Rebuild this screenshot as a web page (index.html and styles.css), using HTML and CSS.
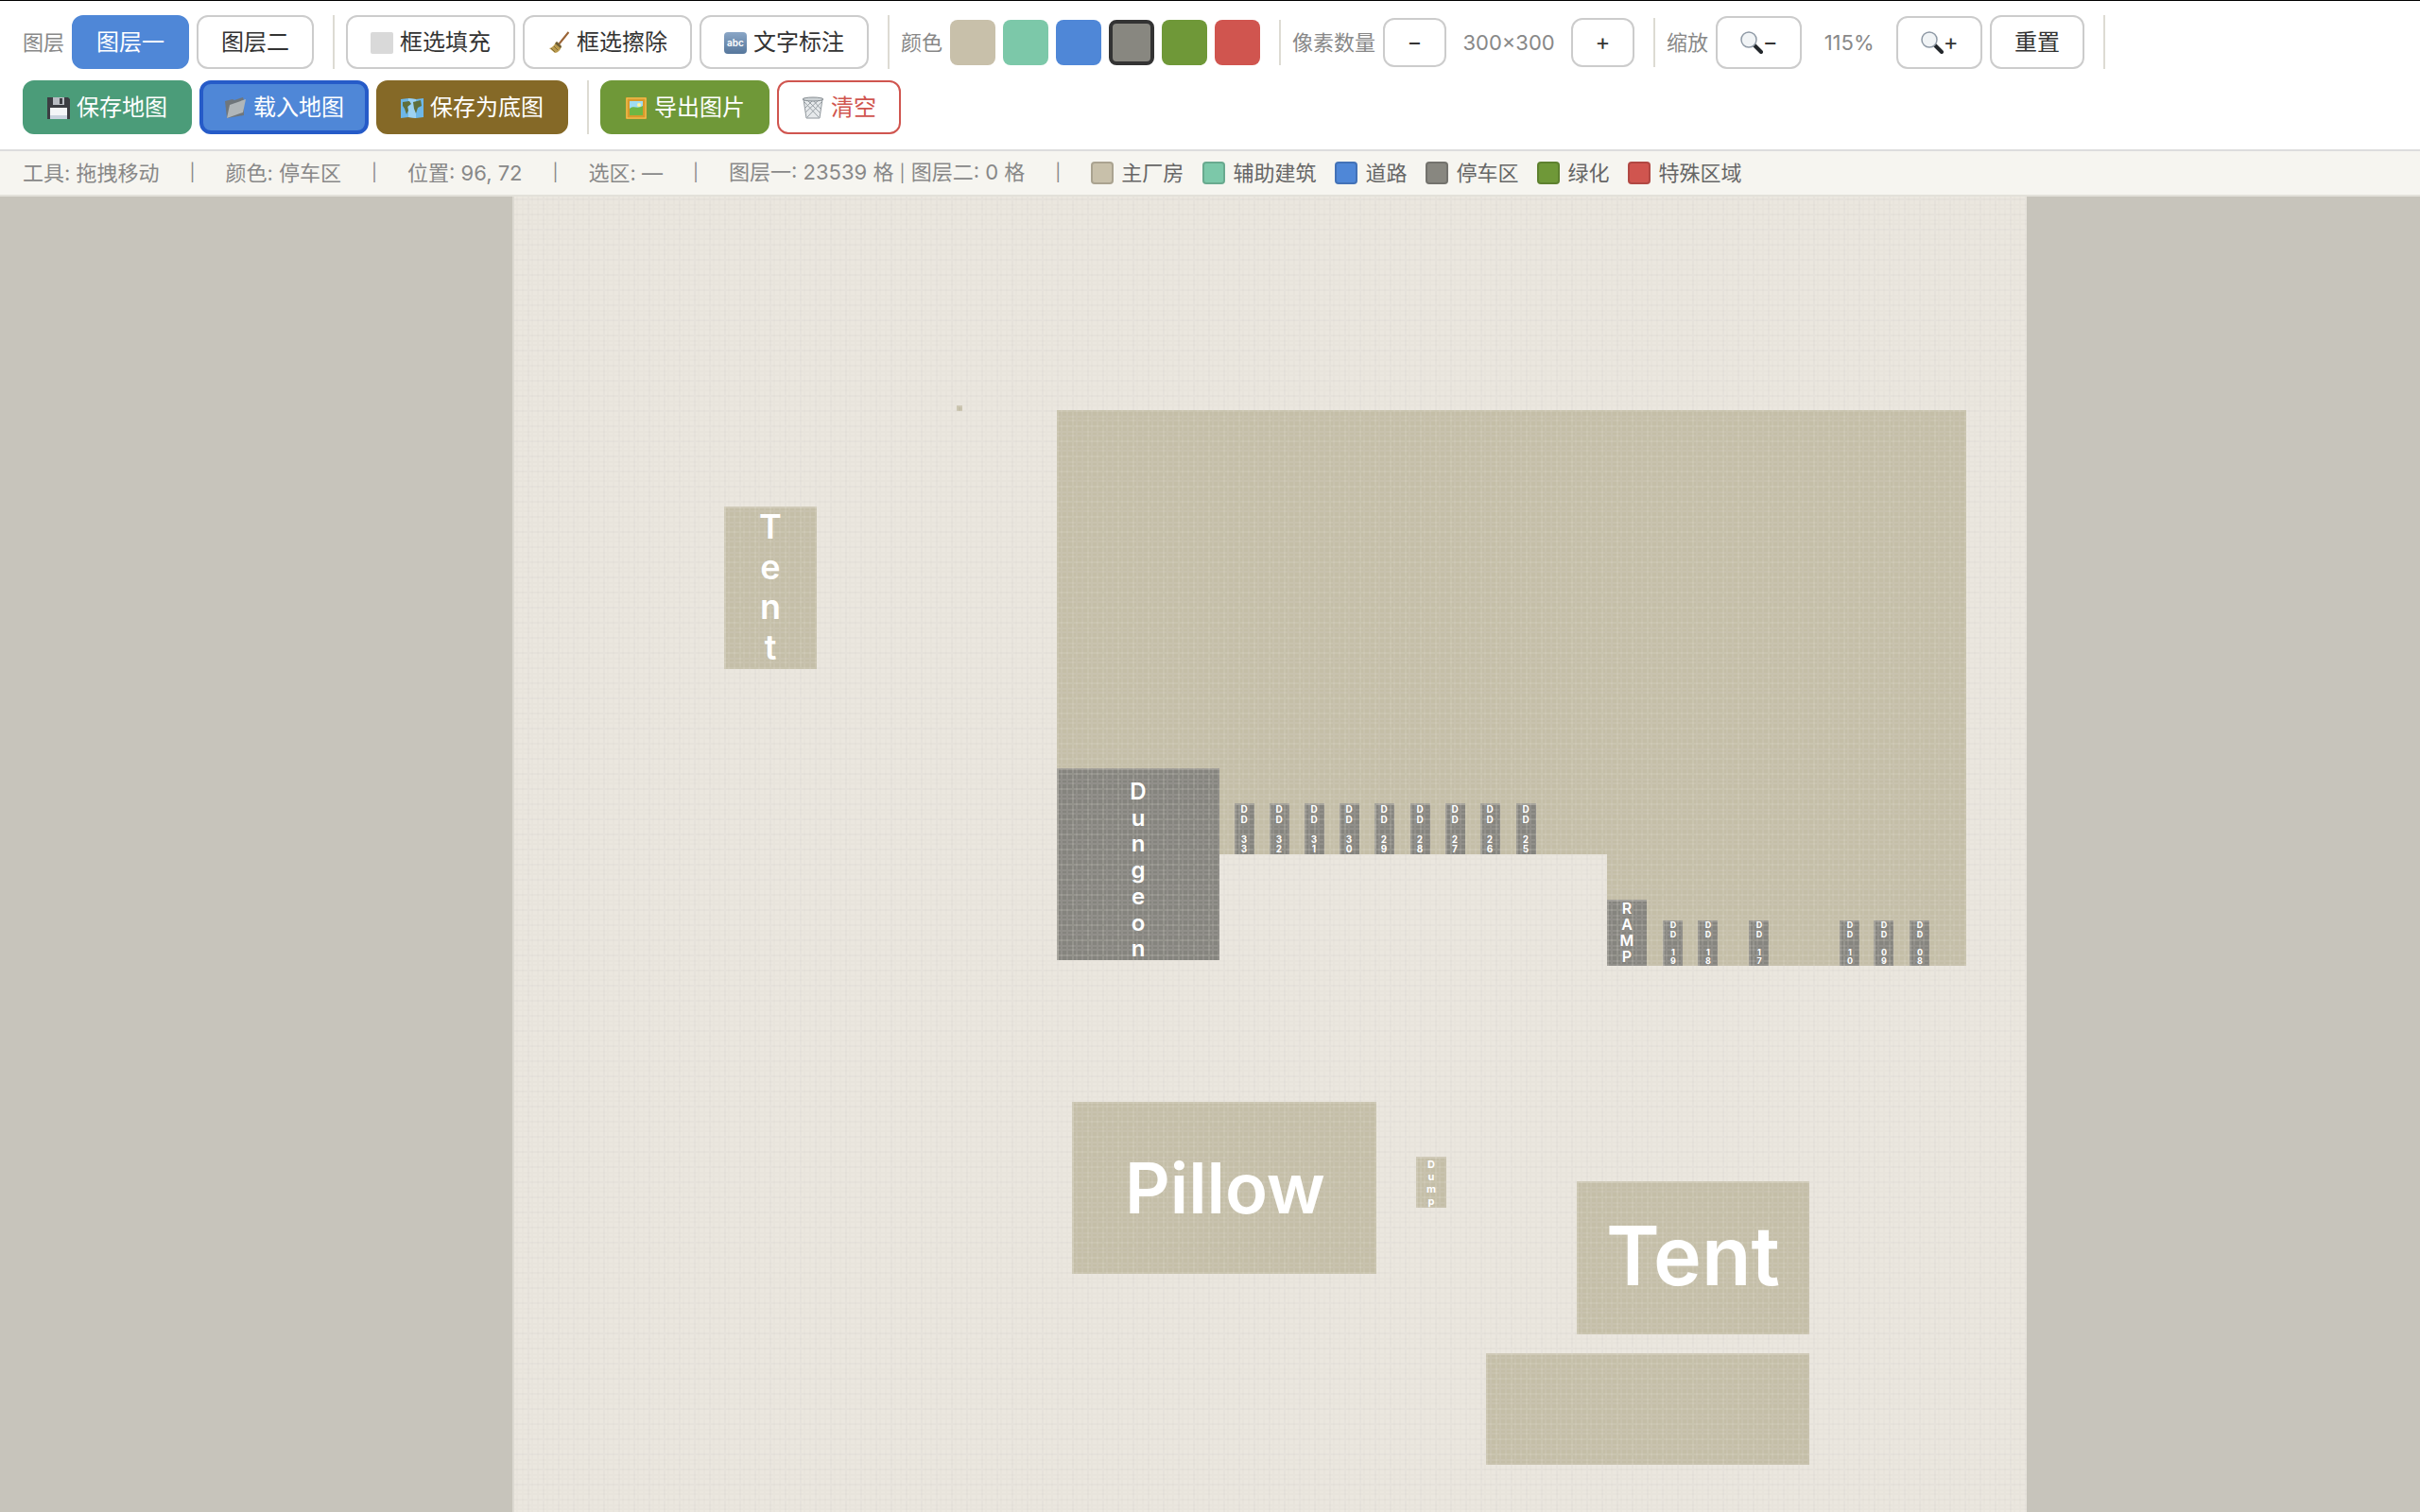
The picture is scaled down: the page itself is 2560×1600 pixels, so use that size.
FILE: index.html
```html
<!DOCTYPE html>
<html lang="zh-CN">
<head>
<meta charset="utf-8">
<title>地图编辑器</title>
<link rel="stylesheet" href="styles.css">
</head>
<body>
<header class="toolbar">
  <div class="group">
    <span class="label">图层</span>
    <button class="btn primary">图层一</button>
    <button class="btn">图层二</button>
  </div>
  <div class="group">
    <button class="btn"><svg class="icon" viewBox="0 0 24 24"><rect y="1" width="24" height="23" rx="2" fill="#d9d9d9"/></svg>框选填充</button>
    <button class="btn"><svg class="icon" viewBox="0 0 24 24"><path d="M22.500 1 12 14" stroke="#9a6335" stroke-width="2"/><path d="M10 11l5 5c-1 4-4 7-7 7L2 18c3 0 5-3 8-7z" fill="#b99a4d"/><path d="M10 11l5 5-1 2-6-5z" fill="#6b5b34"/><path d="M4 18l4 4M7 16l4 4" stroke="#7f6a35"/></svg>框选擦除</button>
    <button class="btn"><svg class="icon" viewBox="0 0 24 24"><defs><linearGradient id="abc" x2="0" y2="1"><stop stop-color="#8aa6c6"/><stop offset="1" stop-color="#56779c"/></linearGradient></defs><rect y="1" width="24" height="23" rx="4" fill="url(#abc)"/><text x="12" y="16" class="abc">abc</text></svg>文字标注</button>
  </div>
  <div class="group">
    <span class="label">颜色</span>
    <button class="swatch c1" aria-label="主厂房"></button>
    <button class="swatch c2" aria-label="辅助建筑"></button>
    <button class="swatch c3" aria-label="道路"></button>
    <button class="swatch c4 active" aria-label="停车区"></button>
    <button class="swatch c5" aria-label="绿化"></button>
    <button class="swatch c6" aria-label="特殊区域"></button>
  </div>
  <div class="group">
    <span class="label">像素数量</span>
    <button class="btn step">−</button>
    <span class="value size">300×300</span>
    <button class="btn step">+</button>
  </div>
  <div class="group zooming">
    <span class="label">缩放</span>
    <button class="btn zoom"><svg class="icon" viewBox="0 0 24 24"><path d="M15 15l7 7" stroke="#23272b" stroke-width="4" stroke-linecap="round"/><circle cx="9" cy="9" r="8" fill="#f1f4f6" stroke="#8f9aa6" stroke-width="1.500"/></svg>−</button>
    <span class="value percent">115%</span>
    <button class="btn zoom"><svg class="icon" viewBox="0 0 24 24"><path d="M15 15l7 7" stroke="#23272b" stroke-width="4" stroke-linecap="round"/><circle cx="9" cy="9" r="8" fill="#f1f4f6" stroke="#8f9aa6" stroke-width="1.500"/></svg>+</button>
    <button class="btn">重置</button>
  </div>
  <div class="group">
    <button class="btn save"><svg class="icon" viewBox="0 0 24 24"><path d="M0 1h22l2 2v21H0z" fill="#3c3d42"/><path d="M6 1h12v8H6z" fill="#b9bcc2"/><path d="M13 2h3v6h-3z" fill="#3c3d42"/><path d="M3 12h18v12H3z" fill="#f4f5f7"/><path d="M3 20h18v4H3z" fill="#c9d2de"/></svg>保存地图</button>
    <button class="btn primary current"><svg class="icon" viewBox="0 0 24 24"><path d="M1 5l8-2 2 1 9-3 1 3v16L3 23z" fill="#6f767b"/><path d="M3 23 6 9l17-6-3 14z" fill="#b0b6b9"/></svg>载入地图</button>
    <button class="btn base"><svg class="icon" viewBox="0 0 24 24"><path d="M0 3l8-1 8 1 8-1v20l-8 1-8-1-8 1z" fill="#6db7e8"/><path d="M8 2l8 1v20l-8-1z" fill="#9dd2f2"/><path d="M2 6l7-1 2 3-4 3 1 4-2 4-2-6-2-3zM13 6l8-2 1 6-4 2-2 6-2-5z" fill="#5f6f3c"/></svg>保存为底图</button>
  </div>
  <div class="group last">
    <button class="btn export"><svg class="icon" viewBox="0 0 24 24"><path d="M1 1h22v23H1z" fill="#d99a2b"/><path d="M2 2h20v21H2z" fill="none" stroke="#f3c85a"/><path d="M5 5h14v15H5z" fill="#9fdcf2"/><path d="M5 13c5-4 8 1 14-3v10H5z" fill="#6fb643"/><circle cx="15" cy="9" r="2" fill="#fff3a0"/></svg>导出图片</button>
    <button class="btn clear"><svg class="icon" viewBox="0 0 24 24"><path d="M2 3h20l-3 20H5z" fill="#e6e9eb" stroke="#90979c"/><path d="M3 6l15 16M6 4l14 14M12 4l8 9M21 6 6 22M18 4 4 17M12 4 4 12" stroke="#9ba2a7"/><ellipse cx="12" cy="3" rx="11" ry="2" fill="#cdd2d5" stroke="#858c91"/></svg>清空</button>
  </div>
</header>
<div class="status">
  <span>工具: 拖拽移动</span><span class="sep">|</span>
  <span>颜色: 停车区</span><span class="sep">|</span>
  <span>位置: 96, 72</span><span class="sep">|</span>
  <span>选区: —</span><span class="sep">|</span>
  <span>图层一: 23539 格 <span class="bar">|</span> 图层二: 0 格</span><span class="sep">|</span>
  <ul class="legend">
    <li><i class="c1"></i>主厂房</li>
    <li><i class="c2"></i>辅助建筑</li>
    <li><i class="c3"></i>道路</li>
    <li><i class="c4"></i>停车区</li>
    <li><i class="c5"></i>绿化</li>
    <li><i class="c6"></i>特殊区域</li>
  </ul>
</div>
<main class="stage">
  <svg class="map" viewBox="0 0 1602 1602" shape-rendering="crispEdges">
    <defs>
      <pattern id="ground" width="16" height="16" y="2" patternUnits="userSpaceOnUse">
        <rect width="16" height="16" fill="#ebe7df"/>
        <path d="M0 0h2v16H0zM0 0h16v2H0z" fill="#000" fill-opacity=".02"/>
        <path d="M4 0h2v16H4zM10 0h2v16h-2zM0 6h16v2H0zM0 10h16v2H0z" fill="#000" fill-opacity=".01"/>
      </pattern>
      <pattern id="lines" width="16" height="16" y="2" patternUnits="userSpaceOnUse">
        <path d="M0 0h2v16H0zM0 0h16v2H0z" fill="#e9e5dd" fill-opacity=".16"/>
        <path d="M4 0h2v16H4zM10 0h2v16h-2zM0 6h16v2H0zM0 10h16v2H0z" fill="#e9e5dd" fill-opacity=".12"/>
      </pattern>
    </defs>
    <rect width="1602" height="1602" fill="url(#ground)"/>
    <rect width="2" height="1602" fill="#dcd9d1"/>
    <g id="blocks"></g>
    <g id="labels"></g>
  </svg>
</main>
<script src="map.js"></script>
</body>
</html>
```
FILE: styles.css
```css
* { box-sizing: border-box; }
body {
  margin: 0;
  height: 100vh;
  display: flex;
  flex-direction: column;
  font-family: Inter, "Noto Sans CJK SC", sans-serif;
  color: #333;
  background: #fff;
}
.toolbar {
  display: flex;
  flex-wrap: wrap;
  align-items: center;
  gap: 12px;
  padding: 15px 24px 16px;
  border-top: 1px solid #000;
  border-bottom: 2px solid #ddd;
}
.group {
  display: flex;
  align-items: center;
  gap: 8px;
  padding-right: 20px;
  border-right: 2px solid #dddbd3;
}
.group.last { border-right: 0; }
.label, .value { font-size: 22px; line-height: 32px; color: #888; white-space: nowrap; }
.value { text-align: center; }
.size { width: 116px; }
.percent { width: 84px; }
.btn {
  display: inline-flex;
  align-items: center;
  justify-content: center;
  gap: 7px;
  height: 57px;
  padding: 0 24px;
  border: 2px solid #ccc;
  border-radius: 12px;
  background: #fff;
  color: #333;
  font: inherit;
  font-size: 24px;
  line-height: 32px;
  white-space: nowrap;
}
.icon { width: 24px; height: 24px; flex: none; fill: none; }
.abc { font: 600 10px Inter, sans-serif; fill: #fff; text-anchor: middle; }
.step { width: 67px; height: 52px; }
.zoom { width: 91px; height: 56px; gap: 0; }
.primary { background: #4f87d7; border-color: #4f87d7; color: #fff; }
.current { border: 4px solid #265bc8; padding: 0 22px; }
.save { background: #4b9c79; border-color: #4b9c79; color: #fff; }
.base { background: #856927; border-color: #856927; color: #fff; }
.export { background: #6f9838; border-color: #6f9838; color: #fff; }
.clear { border-color: #d0554f; color: #d0554f; }
.c1 { background: #c8c0aa; }
.c2 { background: #7cc8a9; }
.c3 { background: #4f87d7; }
.c4 { background: #888780; }
.c5 { background: #6f9838; }
.c6 { background: #d0554f; }
.swatch { width: 48px; height: 48px; padding: 0; border: 0; border-radius: 8px; }
.swatch.active { border: 4px solid #333; }
.status {
  display: flex;
  align-items: center;
  gap: 32px;
  height: 48px;
  padding: 0 24px;
  background: #f6f5f0;
  border-bottom: 2px solid #e3e1da;
  font-size: 22px;
  line-height: 32px;
  color: #888;
  white-space: nowrap;
}
.sep, .bar { font-size: 18px; }
.legend { display: flex; gap: 20px; margin: 0; padding: 0; list-style: none; color: #666; }
.legend li { display: flex; align-items: center; gap: 8px; }
.legend i { width: 24px; height: 24px; border: 2px solid rgba(0, 0, 0, .15); border-radius: 4px; }
.stage { flex: 1; min-height: 0; overflow: hidden; position: relative; background: #c7c4bb; }
.map { position: absolute; left: 542px; top: 0; width: 1602px; height: 1602px; }
.map-label { fill: #fff; font-family: Inter, sans-serif; font-weight: 600; text-anchor: middle; }
.map-label.small { font-weight: 700; }
```
FILE: map.js
```js
const NS = 'http://www.w3.org/2000/svg';
const TAN = '#c4bea7';
const GREY = '#85847e';
const blocks = document.getElementById('blocks');
const labels = document.getElementById('labels');

function add(parent, name, attrs, text) {
  const el = document.createElementNS(NS, name);
  for (const key in attrs) el.setAttribute(key, attrs[key]);
  if (text) el.textContent = text;
  parent.appendChild(el);
  return el;
}

function block(d, color) {
  add(blocks, 'path', { d, fill: color });
  add(blocks, 'path', { d, fill: 'url(#lines)' });
}

function rect(x, y, w, h, color) {
  block(`M${x} ${y}h${w}v${h}h${-w}z`, color);
  add(blocks, 'path', { d: `M${x} ${y}h2v${h}h-2zM${x} ${y}h${w}v2h${-w}z`, fill: '#e9e5dd', 'fill-opacity': .2 });
}

function across(text, x, y, size) {
  add(labels, 'text', { class: 'map-label', x, y, 'font-size': size }, text);
}

// One letter under another, first baseline at y
function down(text, x, y, size, pitch) {
  const el = add(labels, 'text', { class: size < 14 ? 'map-label small' : 'map-label', 'font-size': size });
  [...text].forEach((ch, i) => {
    if (ch !== ' ') add(el, 'tspan', { x, y: y + Math.round(i * pitch) }, ch);
  });
}

block('M576 226h962v588h-380v-118H576z', TAN);
rect(224, 328, 98, 172, TAN);
rect(470, 221, 6, 6, TAN);
rect(592, 958, 322, 182, TAN);
rect(956, 1016, 32, 54, TAN);
rect(1126, 1042, 246, 162, TAN);
rect(1030, 1224, 342, 118, TAN);
rect(576, 605, 172, 203, GREY);
rect(1158, 744, 42, 70, GREY);

[[764, 33], [801, 32], [838, 31], [875, 30], [912, 29], [950, 28], [987, 27], [1024, 26], [1062, 25]]
  .forEach(([x, n]) => {
    rect(x, 642, 21, 54, GREY);
    down('DD ' + n, x + 10, 652, 10, 10.5);
  });

[[1217, '19'], [1254, '18'], [1308, '17'], [1404, '10'], [1440, '09'], [1478, '08']]
  .forEach(([x, n]) => {
    rect(x, 766, 21, 48, GREY);
    down('DD ' + n, x + 11, 774, 9, 9.5);
  });

down('Tent', 273, 362, 36, 42.5);
down('Dungeon', 662, 638, 24, 27.7);
down('RAMP', 1179, 759, 16, 17);
down('Dump', 972, 1028, 11, 13);
across('Pillow', 754, 1076, 74);
across('Tent', 1249, 1152, 86);
```
